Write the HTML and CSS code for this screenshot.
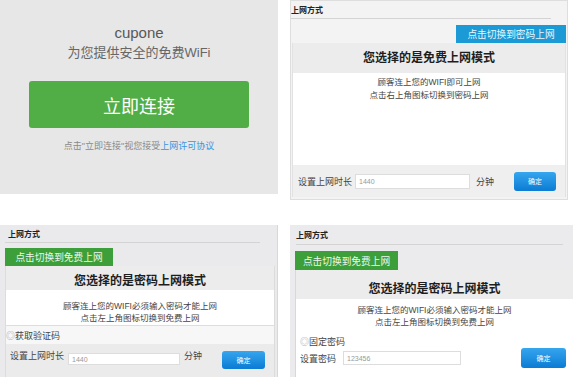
FILE: index.html
```html
<!DOCTYPE html>
<html lang="zh-CN">
<head>
    <meta charset="UTF-8">
    <meta name="viewport" content="width=device-width, initial-scale=1.0">
    <title>上网方式</title>
    <link rel="stylesheet" href="styles.css">
</head>
<body>
    <div class="board">
        <!-- portal page seen by the customer -->
        <section class="portal">
            <div class="brand">cupone</div>
            <div class="slogan">为您提供安全的免费WiFi</div>
            <div class="connect-btn">立即连接</div>
            <div class="agree">点击"立即连接"视您接受<a href="#">上网许可协议</a></div>
        </section>

        <!-- free mode -->
        <section class="mode mode-free">
            <div class="mode-title">上网方式</div>
            <div class="switch-tab tab-blue">点击切换到密码上网</div>
            <div class="box">
                <div class="box-head">您选择的是免费上网模式</div>
                <div class="box-body">
                    <p>顾客连上您的WIFI即可上网</p>
                    <p>点击右上角图标切换到密码上网</p>
                </div>
                <div class="box-foot">
                    <span class="label">设置上网时长</span>
                    <span class="field">1440</span>
                    <span class="unit">分钟</span>
                    <span class="ok-btn">确定</span>
                </div>
            </div>
        </section>

        <!-- password mode, code -->
        <section class="mode mode-code">
            <div class="mode-title">上网方式</div>
            <div class="switch-tab tab-green">点击切换到免费上网</div>
            <div class="box">
                <div class="box-head">您选择的是密码上网模式</div>
                <div class="box-body">
                    <p>顾客连上您的WIFI必须输入密码才能上网</p>
                    <p>点击左上角图标切换到免费上网</p>
                </div>
                <div class="radio-row"><span class="radio">◎</span>获取验证码</div>
                <div class="box-foot">
                    <span class="label">设置上网时长</span>
                    <span class="field">1440</span>
                    <span class="unit">分钟</span>
                    <span class="ok-btn">确定</span>
                </div>
            </div>
        </section>

        <!-- password mode, fixed -->
        <section class="mode mode-fixed">
            <div class="mode-title">上网方式</div>
            <div class="switch-tab tab-green">点击切换到免费上网</div>
            <div class="box">
                <div class="box-head">您选择的是密码上网模式</div>
                <div class="box-body">
                    <p>顾客连上您的WIFI必须输入密码才能上网</p>
                    <p>点击左上角图标切换到免费上网</p>
                </div>
                <div class="radio-row"><span class="radio">◎</span>固定密码</div>
                <div class="box-foot">
                    <span class="label">设置密码</span>
                    <span class="field">123456</span>
                    <span class="ok-btn">确定</span>
                </div>
            </div>
        </section>
    </div>
</body>
</html>
```

FILE: styles.css
```css
* {
    box-sizing: border-box;
}

body {
    margin: 0;
    background-color: #ffffff;
    color: #333333;
    font-family: "Liberation Sans", "Noto Sans CJK SC", sans-serif;
    overflow: hidden;
}

p {
    margin: 0;
}

.board {
    display: grid;
    grid-template-columns: 278px 283px;
    grid-template-rows: 200px 152px;
    column-gap: 12px;
    row-gap: 25px;
}

/* portal */

.portal {
    height: 194px;
    background-color: #e7e7e7;
    display: flex;
    flex-direction: column;
    align-items: center;
    padding-top: 24px;
}

.brand {
    font-size: 15px;
    line-height: 18px;
    color: #585858;
}

.slogan {
    margin-top: 3px;
    font-size: 13px;
    line-height: 16px;
    color: #666666;
}

.connect-btn {
    margin-top: 20px;
    width: 220px;
    height: 47px;
    background-color: #51ae46;
    border-radius: 3px;
    color: #ffffff;
    font-size: 18px;
    display: flex;
    align-items: center;
    justify-content: center;
}

.agree {
    margin-top: 12px;
    font-size: 9px;
    line-height: 12px;
    color: #8a8a8a;
}

.agree a {
    color: #3b93e0;
    text-decoration: none;
}

/* mode panels */

.mode {
    display: flex;
    flex-direction: column;
    background-color: #eaeaed;
    overflow: hidden;
}

.mode-title {
    font-size: 8px;
    font-weight: bold;
    line-height: 10px;
    color: #222222;
    border-bottom: 1px solid #d4d4d4;
}

.switch-tab {
    color: #eef7ee;
    font-size: 9.7px;
    display: flex;
    align-items: center;
    justify-content: center;
}

.tab-blue {
    background-color: #1b9ad6;
    color: #e8f5fc;
}

.tab-green {
    background-color: #3c9f39;
}

.box {
    flex: 1;
    display: flex;
    flex-direction: column;
    background-color: #ffffff;
}

.box-head {
    background-color: #ececec;
    font-size: 12px;
    font-weight: bold;
    line-height: 14px;
    color: #1e1e1e;
    text-align: center;
}

.box-body {
    text-align: center;
    font-size: 8.5px;
    line-height: 12px;
    color: #444444;
}

.radio-row {
    font-size: 9px;
    line-height: 12px;
    color: #444444;
}

.radio {
    color: #999999;
}

.box-foot {
    display: flex;
    align-items: center;
    font-size: 9px;
    color: #444444;
}

.field {
    background-color: #ffffff;
    border: 1px solid #dddddd;
    font-size: 7px;
    color: #999999;
    padding-left: 3px;
    display: flex;
    align-items: center;
}

.ok-btn {
    background: linear-gradient(#36a6ef, #0b7bd4);
    border-radius: 3px;
    color: #ffffff;
    font-size: 7px;
    display: flex;
    align-items: center;
    justify-content: center;
}

/* free mode, top right */

.mode-free {
    width: 278px;
    height: 200px;
    background-color: #f3f3f3;
    border: 1px solid #dedede;
    padding-bottom: 2px;
}

.mode-free .mode-title {
    width: 260px;
    padding-top: 5px;
    padding-bottom: 2px;
}

.mode-free .switch-tab {
    align-self: flex-end;
    margin: 6px 1px 0 0;
    width: 110px;
    height: 18px;
}

.mode-free .box {
    margin: 0 1px;
    border-left: 1px solid #e2e2e2;
    border-right: 1px solid #e2e2e2;
}

.mode-free .box-head {
    height: 30px;
    padding-top: 8px;
}

.mode-free .box-body {
    height: 92px;
    padding-top: 3px;
    line-height: 13px;
}

.mode-free .box-foot {
    flex: 1;
    background-color: #efefef;
    padding-left: 5px;
}

.mode-free .field {
    margin-left: 3px;
    width: 115px;
    height: 15px;
}

.mode-free .unit {
    margin-left: 6px;
}

.mode-free .ok-btn {
    margin-left: 20px;
    width: 42px;
    height: 19px;
}

/* password mode, bottom left */

.mode-code {
    border-right: 1px solid #d8d8d8;
}

.mode-code .mode-title {
    margin-left: 5px;
    width: 255px;
    padding: 5px 0 2px 3px;
}

.mode-code .switch-tab {
    margin: 5px 0 0 5px;
    width: 108px;
    height: 18px;
}

.mode-code .box {
    margin: 0 2px 0 5px;
    border-left: 1px solid #dcdcdc;
    border-right: 1px solid #dcdcdc;
}

.mode-code .box-head {
    height: 24px;
    padding-top: 8px;
}

.mode-code .box-body {
    height: 36px;
    padding-top: 10px;
    border-bottom: 1px solid #dddddd;
}

.mode-code .radio-row {
    height: 18px;
    background-color: #f7f7f7;
    padding-top: 4px;
}

.mode-code .box-foot {
    flex: 1;
    align-items: flex-start;
    background-color: #ebebeb;
    padding-left: 4px;
}

.mode-code .label,
.mode-code .unit {
    margin-top: 6px;
    line-height: 12px;
}

.mode-code .field {
    margin: 9px 0 0 4px;
    width: 112px;
    height: 12px;
}

.mode-code .unit {
    margin-left: 4px;
}

.mode-code .ok-btn {
    margin: 7px 0 0 20px;
    width: 43px;
    height: 18px;
}

/* password mode, bottom right */

.mode-fixed {
    background-color: #ebebed;
}

.mode-fixed .mode-title {
    margin-left: 6px;
    width: 267px;
    padding-top: 6px;
    padding-bottom: 3px;
}

.mode-fixed .switch-tab {
    margin: 6px 0 0 5px;
    width: 103px;
    height: 19px;
}

.mode-fixed .box {
    margin-left: 5px;
    border-left: 1px solid #d8d8d8;
}

.mode-fixed .box-head {
    height: 29px;
    padding-top: 12px;
}

.mode-fixed .box-body {
    padding-top: 5px;
}

.mode-fixed .radio-row {
    margin-top: 8px;
    padding-left: 4px;
}

.mode-fixed .box-foot {
    margin-top: 0;
    height: 20px;
    padding-left: 4px;
}

.mode-fixed .field {
    margin-left: 7px;
    width: 118px;
    height: 14px;
}

.mode-fixed .ok-btn {
    margin-left: 60px;
    width: 45px;
    height: 20px;
}
```
